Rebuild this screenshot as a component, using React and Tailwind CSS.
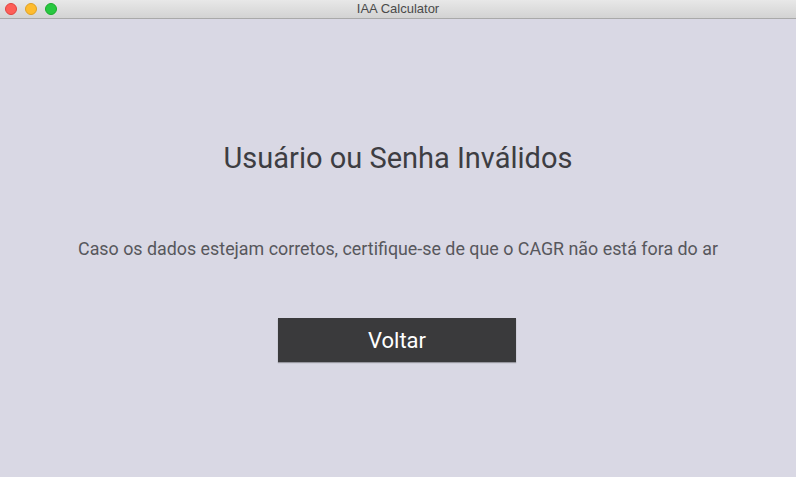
export default function App() {
  return (
    <div className="w-[796px] h-[477px] flex flex-col bg-[#d9d8e4] overflow-hidden" style={{ fontFamily: 'Roboto, "Liberation Sans", sans-serif' }}>
      <div className="h-[19px] shrink-0 flex items-center relative bg-gradient-to-b from-[#e8e8e8] to-[#d3d3d3] border-b border-[#a9a9a9]">
        <div className="flex items-center gap-[8px] pl-[5px]">
          <span className="w-[12px] h-[12px] rounded-full bg-[#fe5f57] border border-[#e0443e]" />
          <span className="w-[12px] h-[12px] rounded-full bg-[#febc2e] border border-[#dea123]" />
          <span className="w-[12px] h-[12px] rounded-full bg-[#28c840] border border-[#1aab29]" />
        </div>
        <div className="absolute inset-0 flex items-center justify-center text-[13px] text-[#4a4a4a]" style={{ fontFamily: '"Liberation Sans", sans-serif' }}>
          IAA Calculator
        </div>
      </div>
      <div className="flex flex-col items-center">
        <h1 className="mt-[121px] text-[29px] leading-[36px] text-[#3d3d42]">Usuário ou Senha Inválidos</h1>
        <p className="mt-[62px] text-[17.85px] leading-[22px] text-[#57575c]">
          Caso os dados estejam corretos, certifique-se de que o CAGR não está fora do ar
        </p>
        <button className="mt-[58px] mr-[2px] w-[238px] h-[44px] bg-[#3a3a3c] text-white text-[22px] shadow-[0_1px_1px_rgba(0,0,0,0.3)]">
          Voltar
        </button>
      </div>
    </div>
  );
}
